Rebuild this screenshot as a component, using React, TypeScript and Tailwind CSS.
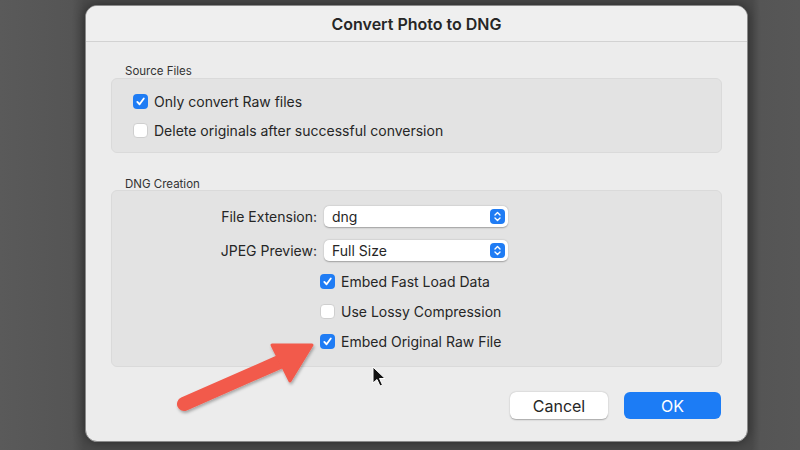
import React from 'react';

const font = { fontFamily: 'Inter, "Noto Sans", sans-serif' };

const Check = ({ on }: { on: boolean }) =>
    on ? (
        <span className="w-[15px] h-[15px] rounded-[4px] bg-[#1f7cf4] flex items-center justify-center shrink-0">
            <svg width="11" height="11" viewBox="0 0 12 12">
                <path d="M2.5 6.4 L5 9 L9.6 2.8" fill="none" stroke="white" strokeWidth="2" strokeLinecap="round" strokeLinejoin="round" />
            </svg>
        </span>
    ) : (
        <span className="w-[15px] h-[15px] rounded-[4px] bg-white border border-[#cfcfcf] shrink-0" />
    );

const CheckRow = ({ on, label }: { on: boolean; label: string }) => (
    <div className="flex items-center gap-[6px] h-[15px]">
        <Check on={on} />
        <span className="text-[14px] text-[#262626] leading-none">{label}</span>
    </div>
);

const Popup = ({ value }: { value: string }) => (
    <div className="w-[184px] h-[21px] bg-white rounded-[5px] shadow-[0_0.5px_1.5px_rgba(0,0,0,0.3)] flex items-center pl-[8px] pr-[3px]">
        <span className="flex-1 text-[14px] text-[#262626] leading-none">{value}</span>
        <span className="w-[15px] h-[15px] rounded-[4px] bg-[#1f7cf4] flex items-center justify-center">
            <svg width="9" height="11" viewBox="0 0 9 11">
                <path d="M2 4 L4.5 1.6 L7 4 M2 7 L4.5 9.4 L7 7" fill="none" stroke="white" strokeWidth="1.4" strokeLinecap="round" strokeLinejoin="round" />
            </svg>
        </span>
    </div>
);

export default function App() {
    return (
        <div className="relative w-[800px] h-[450px] overflow-hidden bg-[linear-gradient(90deg,#5a5a5a_0%,#555_9%,#4a4a4a_10.5%,#4a4a4a_94%,#555_95%,#575757_100%)]" style={font}>
            <div className="pl-[85px] pt-[5px]">
                <div className="w-[663px] h-[437px] rounded-[12px] bg-[#ececec] shadow-[0_0_12px_rgba(0,0,0,0.45)] overflow-hidden flex flex-col border border-[#8a8a8a]">
                    <div className="h-[36px] shrink-0 bg-[#efefef] border-b border-[#d2d2d2] flex items-center justify-center">
                        <span className="text-[16px] font-semibold text-[#262626]">Convert Photo to DNG</span>
                    </div>
                    <div className="flex-1 px-[25px] pt-[23px] flex flex-col">
                        <div className="text-[11.5px] text-[#333] pl-[14px] leading-[12px]">Source Files</div>
                        <div className="mt-[1px] h-[75px] rounded-[6px] bg-[#e3e3e3] border border-[#dadada] pl-[21px] pt-[15px] flex flex-col gap-[14px]">
                            <CheckRow on label="Only convert Raw files" />
                            <CheckRow on={false} label="Delete originals after successful conversion" />
                        </div>
                        <div className="mt-[25px] text-[11.5px] text-[#333] pl-[14px] leading-[12px]">DNG Creation</div>
                        <div className="mt-0 h-[177px] rounded-[6px] bg-[#e3e3e3] border border-[#dadada] pt-[15px] flex flex-col">
                            <div className="flex items-center">
                                <span className="w-[205px] text-right text-[14px] text-[#262626] leading-none">File Extension:</span>
                                <span className="ml-[7px]"><Popup value="dng" /></span>
                            </div>
                            <div className="flex items-center mt-[13px]">
                                <span className="w-[205px] text-right text-[14px] text-[#262626] leading-none">JPEG Preview:</span>
                                <span className="ml-[7px]"><Popup value="Full Size" /></span>
                            </div>
                            <div className="pl-[208px] mt-[13px] flex flex-col gap-[15px]">
                                <CheckRow on label="Embed Fast Load Data" />
                                <CheckRow on={false} label="Use Lossy Compression" />
                                <CheckRow on label="Embed Original Raw File" />
                            </div>
                        </div>
                        <div className="mt-[25px] flex justify-end gap-[16px] pr-[1px]">
                            <button className="w-[98px] h-[27px] rounded-[6px] bg-white shadow-[0_0.5px_1.5px_rgba(0,0,0,0.3)] text-[16px] text-[#262626]">Cancel</button>
                            <button className="w-[97px] h-[27px] rounded-[6px] bg-[#1c7cf5] text-[16px] text-white">OK</button>
                        </div>
                    </div>
                </div>
            </div>

            <svg className="absolute left-0 top-0" width="800" height="450" viewBox="0 0 800 450">
                <defs>
                    <filter id="sh" x="-20%" y="-20%" width="140%" height="140%">
                        <feDropShadow dx="1" dy="2" stdDeviation="1.5" floodColor="#000" floodOpacity="0.3" />
                    </filter>
                </defs>
                <g filter="url(#sh)" fill="#f25a4b" stroke="#f25a4b" strokeLinejoin="round">
                    <line x1="184" y1="404" x2="284" y2="360" strokeWidth="14" strokeLinecap="round" />
                    <path d="M272 345 L312 345 L290 381 Z" strokeWidth="3" />
                </g>
                <path d="M373 367 L373 383 L377 379.5 L380 386 L382.5 385 L379.5 378.5 L385 378.5 Z" fill="#111" stroke="white" strokeWidth="1" strokeLinejoin="round" />
            </svg>
        </div>
    );
}
